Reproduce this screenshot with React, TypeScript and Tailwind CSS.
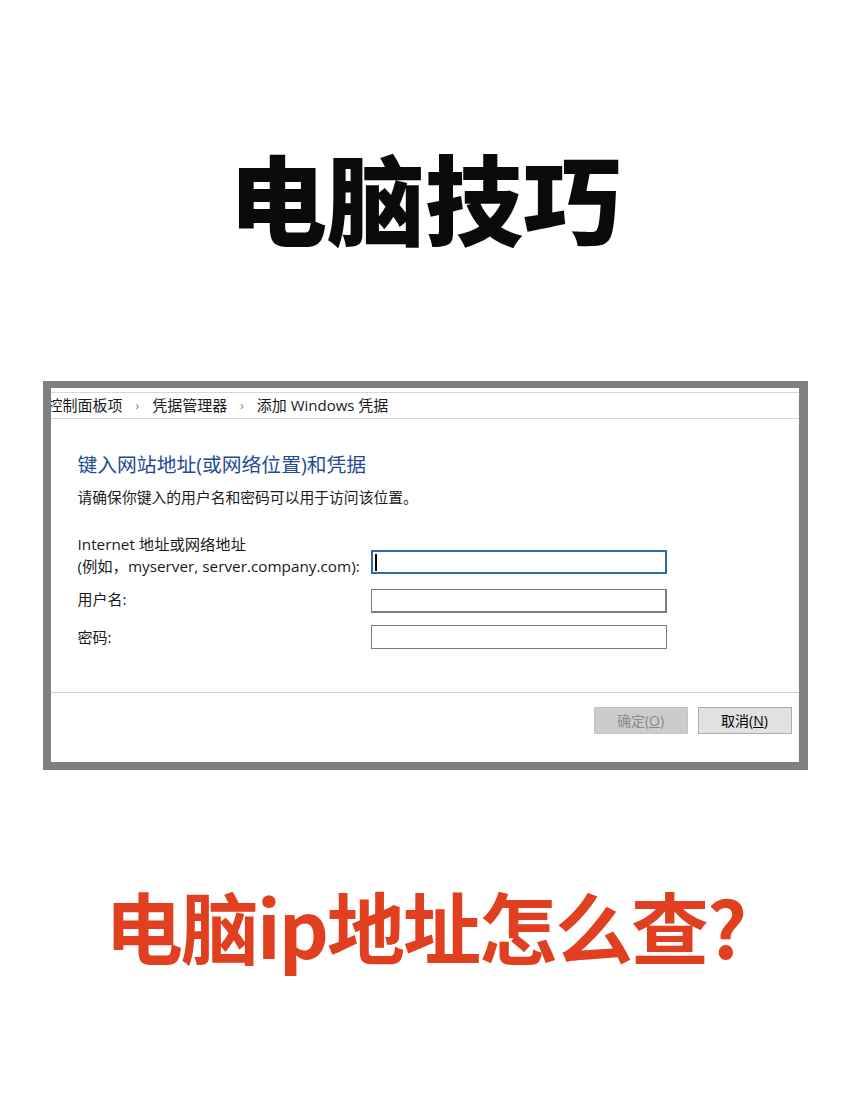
// Poster: title, a Windows "add credential" dialog, and the question line below it

const crumbs = ["控制面板项", "凭据管理器", "添加 Windows 凭据"];

function Field({ focused, heavy }: { focused?: boolean; heavy?: boolean }) {
  if (focused) {
    return (
      <div className="relative h-[24px] w-[296px] border-2 border-[#2b6ead] bg-white">
        <span className="absolute left-[2px] top-[2px] h-[17px] w-[2px] bg-black" />
      </div>
    );
  }
  return (
    <div
      className={
        heavy
          ? "h-[24px] w-[296px] border border-b-2 border-r-2 border-[#7c7c7c] bg-white"
          : "h-[24px] w-[296px] border border-[#7c7c7c] bg-white"
      }
    />
  );
}

function CredentialDialog() {
  return (
    <div className="mt-[133px] w-[765px] border-b-[8px] border-l-[8px] border-r-[9px] border-t-[7px] border-[#7f7f7f] bg-white font-['Open_Sans','Noto_Sans_CJK_SC',sans-serif] text-[15px] text-[#1a1a1a]">
      <div className="pt-[4px]">
        <div className="flex h-[27px] items-center overflow-hidden whitespace-nowrap border-y border-[#d6d6d6]">
          {crumbs.map((c, i) => (
            <div key={c} className="flex items-center">
              {i > 0 && <span className="mx-[13px] text-[12px] text-[#777]">›</span>}
              <span className={i === 0 ? "-ml-[3px]" : ""}>{c}</span>
            </div>
          ))}
        </div>
      </div>

      <div className="pl-[27px]">
        <h2 className="mt-[33px] text-[19.8px] leading-[26px] text-[#1f4a94]">
          键入网站地址(或网络位置)和凭据
        </h2>
        <p className="mt-[9px] text-[14.8px] leading-[20px]">请确保你键入的用户名和密码可以用于访问该位置。</p>

        <div className="mt-[26px] flex flex-col gap-[12px]">
          <div className="flex items-end">
            <div className="w-[293px] text-[15.3px] leading-[22px]">
              <div>Internet 地址或网络地址</div>
              <div>(例如，myserver, server.company.com):</div>
            </div>
            <div className="mb-[3px]">
              <Field focused />
            </div>
          </div>
          <div className="flex items-center">
            <div className="-mt-[3px] w-[293px]">用户名:</div>
            <Field heavy />
          </div>
          <div className="flex items-center">
            <div className="w-[293px]">密码:</div>
            <Field />
          </div>
        </div>
      </div>

      <div className="mt-[43px] border-t border-[#cfcfcf] pb-[28px] pt-[14px] pr-[7px]">
        <div className="flex justify-end gap-[10px]">
          <button className="h-[27px] w-[94px] border border-[#c4c4c4] bg-[#cccccc] text-[14px] text-[#8a8a8a]">
            确定(<span className="underline">O</span>)
          </button>
          <button className="h-[27px] w-[94px] border border-[#adadad] bg-[#e1e1e1] text-[14px] text-black">
            取消(<span className="underline">N</span>)
          </button>
        </div>
      </div>
    </div>
  );
}

export default function App() {
  return (
    <div className="flex h-[1104px] w-[850px] flex-col items-center bg-white">
      <h1 className="mt-[142px] font-['Noto_Sans_CJK_SC',sans-serif] text-[98px] font-black leading-[106px] text-[#0a0a0a]">
        电脑技巧
      </h1>
      <CredentialDialog />
      <p className="mt-[112px] font-['Noto_Sans_CJK_SC',sans-serif] text-[78px] font-bold leading-[86px] tracking-[-2px] text-[#e0401f]">
        电脑ip地址怎么查?
      </p>
    </div>
  );
}
